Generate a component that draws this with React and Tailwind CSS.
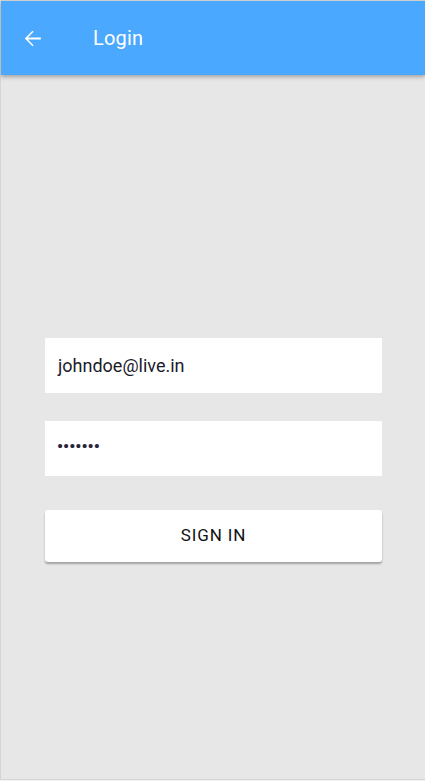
export default function App() {
  return (
    <div className="w-[425px] h-[781px] bg-[#f2f2f2]" style={{ fontFamily: 'Roboto, "Liberation Sans", sans-serif' }}>
      <div className="w-[425px] h-[780px] border-t border-l border-b border-[#d6d6d6] bg-[#e7e7e7] flex flex-col">
        <header className="h-[74px] bg-[#4aa8ff] flex items-center shadow-[0_2px_4px_rgba(0,0,0,0.3)] relative z-10">
          <div className="w-[62px] flex justify-center">
            <svg width="25" height="25" viewBox="0 0 24 24" fill="white">
              <path d="M20 11.1H7.6l5.4-5.5L12 4.6 4.6 12l7.4 7.4 1-1-5.4-5.5H20z" />
            </svg>
          </div>
          <h1 className="ml-[30px] text-white text-[20px] leading-none tracking-[0.2px]">Login</h1>
        </header>
        <main className="flex-1 pl-[44px] pr-[43px] pt-[263px]">
          <div className="bg-white h-[55px] flex items-center px-[13px] text-[18px] text-[#1b1b2a]">johndoe@live.in</div>
          <div className="bg-white h-[55px] mt-[28px] flex items-center px-[12px] text-[17px] text-[#2a2438]">
            <span className="-mt-[4px] font-bold">•••••••</span>
          </div>
          <button className="mt-[34px] w-full h-[52px] bg-white rounded-[3px] shadow-[0_2px_2px_rgba(0,0,0,0.3)] text-[17px] tracking-[0.9px] text-[#111]">SIGN IN</button>
        </main>
      </div>
    </div>
  );
}
